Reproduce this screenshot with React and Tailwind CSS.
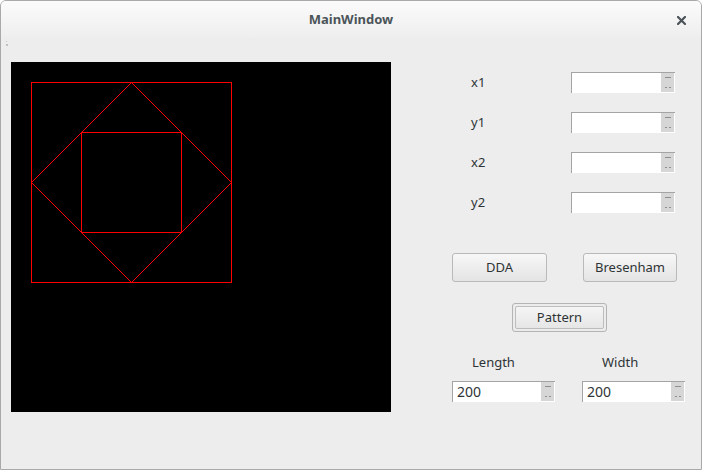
import React from "react";

const font = { fontFamily: '"Noto Sans", "Open Sans", sans-serif' };

function SpinBox({ value = "", width = "w-[104px]" }) {
  return (
    <div className={`flex h-[21px] ${width} border-l border-t border-[#a4a4a4] bg-white`}>
      <div className="flex flex-1 items-center pl-[4px] text-[14px] leading-none text-[#2e3436]">
        {value}
      </div>
      <div className="mb-[1px] mr-[1px] flex w-[13px] flex-col items-center justify-between bg-[#d6d6d6] pb-[4px] pt-[4px]">
        <div className="h-[1px] w-[6px] bg-[#8e8e8e]" />
        <div className="flex gap-[2px]">
          <div className="h-[1px] w-[2px] bg-[#8e8e8e]" />
          <div className="h-[1px] w-[2px] bg-[#8e8e8e]" />
        </div>
      </div>
    </div>
  );
}

function Button({ children, width = "w-[95px]" }) {
  return (
    <div
      className={`flex h-[29px] ${width} items-center justify-center rounded-[3px] border border-[#b9b9b9] bg-gradient-to-b from-[#f7f7f7] to-[#e4e4e4] text-[13px] text-[#2e3436]`}
    >
      {children}
    </div>
  );
}

function Canvas() {
  return (
    <div className="h-[350px] w-[380px] bg-black">
      <svg width="380" height="350" shapeRendering="crispEdges">
        <g stroke="#ff0000" strokeWidth="1" fill="none">
          <rect x="20.5" y="20.5" width="200" height="200" />
          <rect x="70.5" y="70.5" width="100" height="100" />
          <polygon points="120.5,20.5 220.5,120.5 120.5,220.5 20.5,120.5" />
        </g>
      </svg>
    </div>
  );
}

export default function App() {
  const rows = ["x1", "y1", "x2", "y2"];
  return (
    <div
      className="flex h-[470px] w-[702px] flex-col overflow-hidden rounded-t-[6px] border border-[#a9a9a9] bg-[#ededed]"
      style={font}
    >
      <div className="relative flex h-[37px] shrink-0 items-center justify-center bg-gradient-to-b from-[#fbfbfb] to-[#eeeeee]">
        <span className="text-[13px] font-bold text-[#4b5459]">MainWindow</span>
        <svg
          className="absolute right-[15px] top-[15px]"
          width="9"
          height="9"
          viewBox="0 0 9 9"
        >
          <path d="M1 1L8 8M8 1L1 8" stroke="#4b5459" strokeWidth="2.2" strokeLinecap="square" />
        </svg>
      </div>

      <div className="relative flex flex-1 pl-[10px] pt-[24px]">
        <div className="absolute left-[5px] top-[3px] flex flex-col gap-[2px]">
          <div className="h-[1px] w-[1px] bg-[#c8c8c8]" />
          <div className="h-[2px] w-[2px] bg-[#c0c0c0]" />
        </div>

        <Canvas />

        <div className="ml-[61px] flex flex-col pt-[10px]">
          <div className="flex flex-col gap-[19px]">
            {rows.map((r) => (
              <div key={r} className="flex h-[21px] items-center">
                <div className="w-[119px] pl-[19px] text-[13px] text-[#2e3436]">{r}</div>
                <SpinBox />
              </div>
            ))}
          </div>

          <div className="mt-[40px] flex gap-[36px]">
            <Button width="w-[95px]">DDA</Button>
            <Button width="w-[94px]">Bresenham</Button>
          </div>

          <div className="ml-[60px] mt-[21px] flex h-[29px] w-[95px] items-center justify-center rounded-[3px] border border-[#b4b4b4] bg-[#ececec] p-[2px]">
            <div className="flex h-full w-full items-center justify-center rounded-[2px] border border-[#bdbdbd] bg-gradient-to-b from-[#f5f5f5] to-[#e6e6e6] text-[13px] text-[#2e3436]">
              Pattern
            </div>
          </div>

          <div className="mt-[21px] flex text-[13px] text-[#2e3436]">
            <div className="w-[130px] pl-[20px]">Length</div>
            <div className="pl-[20px]">Width</div>
          </div>

          <div className="mt-[8px] flex gap-[27px]">
            <SpinBox value="200" width="w-[103px]" />
            <SpinBox value="200" width="w-[103px]" />
          </div>
        </div>
      </div>
    </div>
  );
}
